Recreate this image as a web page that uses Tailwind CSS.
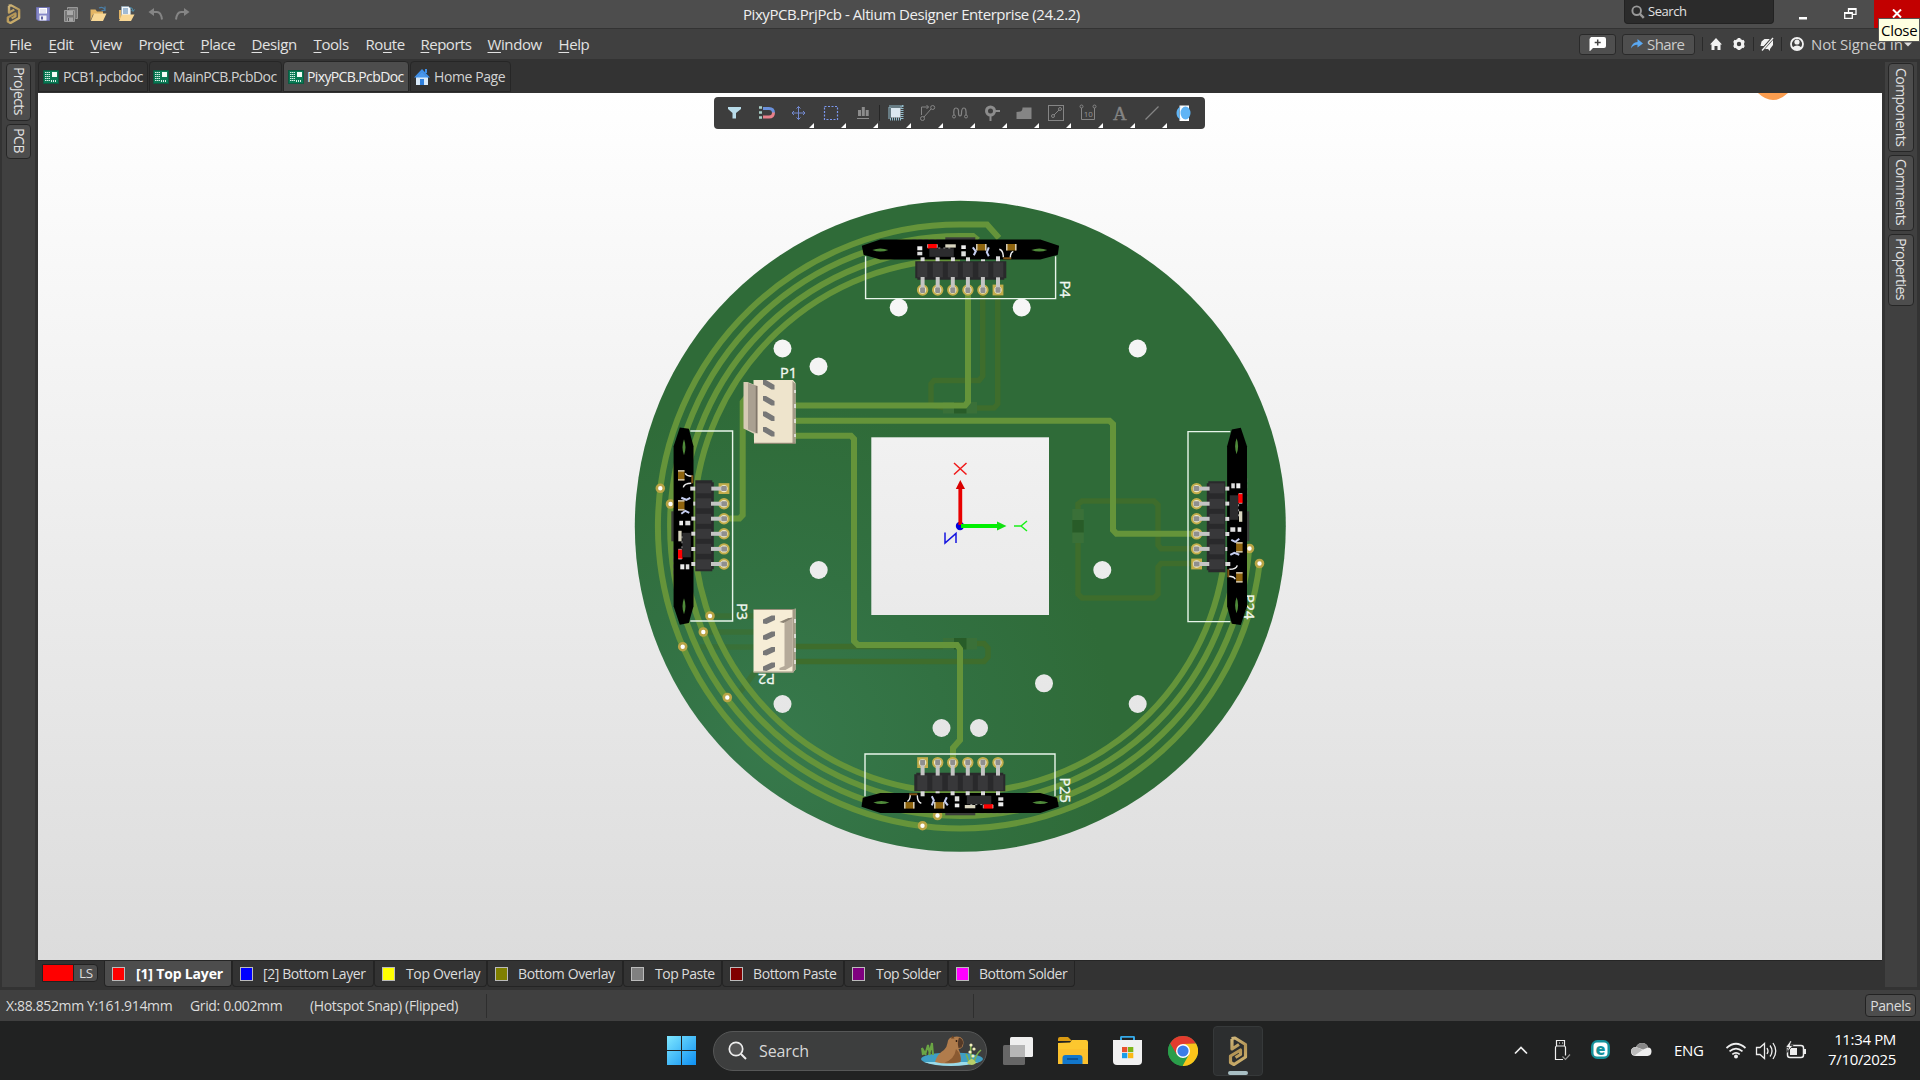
<!DOCTYPE html>
<html lang="en">
<head>
<meta charset="utf-8">
<title>PixyPCB.PrjPcb - Altium Designer Enterprise (24.2.2)</title>
<script src="https://cdn.jsdelivr.net/npm/@tailwindcss/browser@4"></script>
</head>
<body class="w-[1920px] h-[1080px] overflow-hidden bg-[#333333] font-['Open_Sans',sans-serif] text-[#e2e2e2] flex flex-col">

<svg class="absolute w-0 h-0">
  <defs>
    <linearGradient id="gold" gradientUnits="userSpaceOnUse" x1="0" y1="0" x2="20" y2="30"><stop offset="0" stop-color="#d8c084"/><stop offset=".5" stop-color="#b39455"/><stop offset="1" stop-color="#dcc17c"/></linearGradient>
    <symbol id="altium" viewBox="0 0 20 30">
      <path d="M3.500 2.500L7 2 17.500 8.500V21L6 28.500 2.500 26.500V20L12.500 14V18.500L7.500 21.500" fill="none" stroke="url(#gold)" stroke-width="3.200" stroke-linejoin="round"/>
      <path d="M4 3V13L11 8.500" fill="none" stroke="url(#gold)" stroke-width="3.200" stroke-linejoin="round"/>
    </symbol>
    <symbol id="pcbdoc" viewBox="0 0 16 14">
      <rect x=".5" y=".5" width="15" height="13" fill="#0a7a55" stroke="#0c5a41"/>
      <path d="M2 2.500h5M2 4.500h5M2 6.500h5M2 8.500h5M2 10.500h5" stroke="#d8efe6" stroke-width="1" stroke-dasharray="1.500 .5"/>
      <rect x="9" y="2" width="5" height="5" fill="#f2fbf7"/>
      <path d="M8.500 10v2M10.500 10v2M12.500 10v2" stroke="#d8efe6"/>
    </symbol>
    <symbol id="mag" viewBox="0 0 16 16"><circle cx="6.500" cy="6.500" r="4.900" fill="none" stroke="currentColor" stroke-width="2.200"/><path d="M10 10l4.600 4.800" stroke="currentColor" stroke-width="2.800"/></symbol>
  </defs>
</svg>

<!-- Title bar -->
<header class="h-7 shrink-0 bg-[#4d4d4d] flex relative">
  <div class="flex items-center w-[240px] pl-[6px]">
    <svg class="w-[15px] h-[20px]" viewBox="0 0 20 30" preserveAspectRatio="none"><use href="#altium" width="20" height="30"/></svg>
    <svg class="ml-[15px] w-[14px] h-[14px]" viewBox="0 0 14 14"><path d="M.5.5h13v13H2L.5 12z" fill="#8688c8" stroke="#6d6fae"/><rect x="3" y="1" width="8" height="5.500" fill="#fff"/><path d="M4 3h6M4 5h6" stroke="#b8b8d8" stroke-width=".7"/><rect x="3.500" y="8.500" width="7" height="5" fill="#f0f0f8"/><rect x="5" y="9.500" width="2" height="3" fill="#6264a4"/></svg>
    <svg class="ml-[14px] w-[14px] h-[15px]" viewBox="0 0 14 15"><path d="M3.500.5h10v11h-2M3.500.5v2" fill="#777" stroke="#999"/><path d="M.5 3.500h10v11h-10z" fill="#777" stroke="#9b9b9b"/><path d="M3 4h6v4H3z" fill="#aaa"/><path d="M3 10.500h6V14H3z" fill="#a5a5a5"/><path d="M4.500 11v3" stroke="#555"/></svg>
    <svg class="ml-[12px] w-[17px] h-[16px]" viewBox="0 0 17 16"><path d="M.5 3.500h5l1.500 2h6v3H3l-2.500 6z" fill="#e3b565"/><path d="M4 7.500h12.500L13 15H.8z" fill="#f8d795"/><path d="M9 2q4-2 6 2M15 .5v4h-3.500" fill="none" stroke="#4a7fa8" stroke-width="1.200"/></svg>
    <svg class="ml-[11px] w-[17px] h-[16px]" viewBox="0 0 17 16"><path d="M1 4h12v9H1z" fill="#e0b364"/><path d="M3.500.5h7l2 2V10h-9z" fill="#f4f7fa" stroke="#8da5b8" stroke-width=".7"/><path d="M5 3h5M5 5h5M5 7h5" stroke="#4d7fae"/><path d="M4 8.500h12.500L13 15H1z" fill="#f8d795"/><path d="M12 1.500q3 0 3 3.500M16.500 3.500L15 5.500 13.500 4" fill="none" stroke="#4a8fae"/></svg>
    <svg class="ml-[13px] w-[15px] h-[12px]" viewBox="0 0 15 12"><path d="M6 0v8L.5 4z" fill="#858585"/><path d="M5 4h4q4 0 5 7.500" fill="none" stroke="#858585" stroke-width="2"/></svg>
    <svg class="ml-[12px] w-[15px] h-[12px]" viewBox="0 0 15 12"><path d="M9 0v8l5.500-4z" fill="#858585"/><path d="M10 4H6q-4 0-5 7.500" fill="none" stroke="#858585" stroke-width="2"/></svg>
  </div>
  <div class="w-[1384px] pl-[503px] pt-[4px] leading-5 text-[15px] tracking-[-0.44px] text-[#efefef] whitespace-nowrap">PixyPCB.PrjPcb - Altium Designer Enterprise (24.2.2)</div>
  <div class="w-[150px] h-6 bg-[#2b2b2b] border border-t-0 border-[#222] rounded-b flex items-center pl-[6px] pt-px text-[13px] tracking-[-0.45px]">
    <svg class="w-[14px] h-[14px] text-[#999] mr-[3px]"><use href="#mag"/></svg>Search
  </div>
  <div class="w-[100px] flex">
    <svg class="w-[100px] h-[28px]" viewBox="1774 0 100 28"><rect x="1799" y="17" width="8" height="2.500" fill="#fff"/><path d="M1848.500 12V8.700h7.500v5.600h-3.500M1844.700 12.700h7.600v5.600h-7.600z" fill="none" stroke="#fff" stroke-width="1.300"/><path d="M1848 9h8M1844 13h8" stroke="#fff" stroke-width="2"/></svg>
  </div>
  <div class="w-[46px] bg-[#c20000] flex justify-center pt-[9px]">
    <svg class="w-[10px] h-[9px]" viewBox="0 0 10 9"><path d="M1 .5l8 8M9 .5l-8 8" stroke="#fff" stroke-width="2"/></svg>
  </div>
  <div class="absolute z-10 left-[1878px] top-[18px] w-[42px] h-6 bg-[#ffffe1] border border-[#555] text-black text-[15px] leading-[22px] pl-[2px] tracking-[-0.3px]">Close</div>
</header>

<!-- Menu bar -->
<nav class="h-[31px] shrink-0 bg-[#404040] border-t border-[#333] flex items-center text-[15px] tracking-[-0.4px] underline-offset-2 whitespace-nowrap">
  <div class="flex w-[1579px] pl-[9.500px]">
    <span class="w-[39px]"><u>F</u>ile</span><span class="w-[42px]"><u>E</u>dit</span><span class="w-[48px]"><u>V</u>iew</span><span class="w-[62px] tracking-[-0.5px]">Proje<u>c</u>t</span><span class="w-[51px]"><u>P</u>lace</span><span class="w-[62px]"><u>D</u>esign</span><span class="w-[52px]"><u>T</u>ools</span><span class="w-[55px]">Ro<u>u</u>te</span><span class="w-[67px] tracking-[-0.5px]"><u>R</u>eports</span><span class="w-[71px]"><u>W</u>indow</span><span><u>H</u>elp</span>
  </div>
  <div class="w-[37px] h-[21px] rounded-[3px] border border-[#2a2a2a] bg-[#4f4f4f] flex items-center justify-center"><svg class="w-[17px] h-[14px]" viewBox="0 0 17 14"><path d="M2 0h13a2 2 0 012 2v7a2 2 0 01-2 2H4L1 14H.5V2z" fill="#fff"/><path d="M8.700 2.500v6M5.700 5.500h6" stroke="#444" stroke-width="1.500"/></svg></div>
  <div class="ml-[6px] w-[73px] h-[21px] rounded-[3px] border border-[#2a2a2a] bg-[#4f4f4f] flex items-center pl-[8px] text-[#ccc] tracking-[-0.6px]"><svg class="w-[12px] h-[10px] mr-[4px]" viewBox="0 0 12 10"><path d="M0 9.500Q1 3 6.500 3V0L12 4.500 6.500 8.500V5.800Q2.500 5.500 0 9.500z" fill="#5aa8f2"/></svg>Share</div>
  <svg class="w-[110px] h-[30px]" viewBox="1695 29 110 30">
    <path d="M1702.500 37v14M1753.500 37v14M1781.500 37v14" stroke="#2a2a2a"/>
    <path d="M1716 38l6 6.500h-1.500V50h-3v-4h-3v4h-3v-5.500H1710z" fill="#f2f2f2"/>
    <circle cx="1739" cy="44" r="3.700" fill="none" stroke="#f2f2f2" stroke-width="3"/><path d="M1739 38v3M1739 47v3M1733.800 41l2.600 1.500M1741.600 45.500l2.600 1.500M1733.800 47l2.600-1.500M1741.600 42.500l2.600-1.500" stroke="#f2f2f2" stroke-width="2.800"/>
    <path d="M1760.500 46l1-4.500 3-2.500h5.500l-6 7zM1765 49l8-9v5l-3 4v2l-2-2z" fill="#f2f2f2"/><path d="M1761.500 50.500l11.500-13" stroke="#404040" stroke-width="2.500"/><path d="M1762 50.500l11-12.500" stroke="#f2f2f2" stroke-width="1.300"/>
    <circle cx="1797" cy="44" r="6" fill="none" stroke="#f2f2f2" stroke-width="1.800"/><circle cx="1797" cy="42" r="2.600" fill="#f2f2f2"/><path d="M1792.500 47.500q4.500-4 9 0-4.500 5-9 0z" fill="#f2f2f2"/>
  </svg>
  <span class="ml-[6px] text-[#ccc] tracking-[-0.15px]">Not Signed In</span>
  <svg class="ml-px w-[8px] h-[5px]" viewBox="0 0 8 5"><path d="M0 .5h8L4 4.500z" fill="#ddd"/></svg>
</nav>

<!-- Workspace -->
<main class="h-[931px] shrink-0 flex">
  <aside class="w-[38px] pt-[3px] pb-[3px] pl-[2px]">
    <div class="w-[33px] h-[925px] bg-[#404040] flex flex-col items-center gap-[3px] pt-px">
      <div class="w-[25px] h-[58px] rounded border border-[#262626] bg-[#4d4d4d] [writing-mode:vertical-rl] text-[14px] leading-[21px] tracking-[-0.55px] pt-[3px]">Projects</div>
      <div class="w-[25px] h-[35px] rounded border border-[#262626] bg-[#4d4d4d] [writing-mode:vertical-rl] text-[14px] leading-[21px] tracking-[-0.4px] pt-[3px]">PCB</div>
    </div>
  </aside>

  <section class="w-[1844px] flex flex-col">
    <div class="h-[34px] pt-[2px] flex gap-px text-[14px] tracking-[-0.5px] text-[#d2d2d2] whitespace-nowrap">
      <div class="w-[110px] h-[31px] border border-[#262626] rounded-t flex items-center pl-[4px]"><svg class="w-4 h-[14px] mr-[4px]"><use href="#pcbdoc"/></svg>PCB1.pcbdoc</div>
      <div class="w-[133px] h-[31px] border border-[#262626] rounded-t flex items-center pl-[3px] tracking-[-0.56px]"><svg class="w-4 h-[14px] mr-[4px]"><use href="#pcbdoc"/></svg>MainPCB.PcbDoc</div>
      <div class="w-[126px] h-[31px] border border-[#262626] rounded-t bg-[#4d4d4d] text-[#f0f0f0] flex items-center pl-[4px] tracking-[-0.62px]"><svg class="w-4 h-[14px] mr-[3px]"><use href="#pcbdoc"/></svg>PixyPCB.PcbDoc</div>
      <div class="w-[101px] h-[31px] border border-[#262626] rounded-t flex items-center pl-[3px] tracking-[-0.4px]"><svg class="w-4 h-[16px] mr-[4px]" viewBox="0 0 16 16"><path d="M2 8h12v8H2z" fill="#d9eafa"/><path d="M8 0l8 8.500h-2.500L8 3.500 2.500 8.500H0zM11 0h2v4h-2z" fill="#3f8fe8"/><path d="M8 3l6 5.500H2z" fill="#4a97ec"/><path d="M6 10h4v6H6z" fill="#2f80dd"/></svg>Home Page</div>
    </div>

    <div class="relative h-[867px] bg-linear-to-b from-white to-[#dcdcdc]">
      <svg class="block w-[1844px] h-[867px]" viewBox="38 93 1844 867">
        <defs>
          <linearGradient id="sky" gradientUnits="userSpaceOnUse" x1="0" y1="93" x2="0" y2="960"><stop offset="0" stop-color="#fff"/><stop offset="1" stop-color="#dcdcdc"/></linearGradient>
          <radialGradient id="board" gradientUnits="userSpaceOnUse" cx="775" cy="740" r="340"><stop offset="0" stop-color="#37794c"/><stop offset=".5" stop-color="#327142"/><stop offset="1" stop-color="#2f6b38"/></radialGradient>
          <g id="via"><circle r="3.500" fill="#fff" stroke="#b8a445" stroke-width="2.600"/></g>
          <g id="pad"><circle r="4.700" fill="#efe9c8" stroke="#c2ad4b" stroke-width="2"/><rect x="-2" y="-13" width="4" height="13" fill="#c4c4c4"/><rect x="-2.500" y="-2.500" width="5" height="5.500" rx="1" fill="#8f8f8f"/></g>
          <!-- Sensor module standing on a six-pin header -->
          <g id="module">
            <path d="M865.300 256V298.300H1055.300V256" fill="none" stroke="#e8f5ea" stroke-width="1.400"/>
            <path d="M945 237h30v4h-30z" fill="#3a3d3a"/>
            <path d="M912 239.500h30" stroke="#666" stroke-dasharray="4 2"/>
            <path d="M861.500 245.500L880 239.300H1040L1058.800 245.500L1057.500 254.500L1040 259.200H880L863.300 254.500z" fill="#000"/>
            <path d="M872 249.700q8-3 16 0-8 3-16 0zM1031 249.700q8-3 16 0-8 3-16 0z" fill="#4f8a3a"/>
            <rect x="917" y="246" width="5" height="4" fill="#eee"/><rect x="917" y="251.500" width="5" height="3.500" fill="#ddd"/>
            <rect x="927.300" y="243.700" width="9.500" height="4.600" fill="#ff0000"/><path d="M927.300 244v3.500M937 244v3.500" stroke="#ddd" stroke-width=".7"/>
            <rect x="929" y="248" width="24.500" height="8.500" fill="#2c2c2e"/><path d="M938 247.700h14" stroke="#999" stroke-dasharray="2 3"/>
            <rect x="945" y="244" width="10.500" height="3.300" fill="#d8d4bf"/>
            <rect x="961" y="245" width="4.500" height="3.700" fill="#eee"/><rect x="961" y="251" width="4.500" height="5" fill="#ddd"/>
            <rect x="976" y="243.700" width="10" height="6.500" fill="#8f640e"/><path d="M976.500 243.700v6.500M985.500 243.700v6.500" stroke="#e2ddd0" stroke-width="1.300"/>
            <path d="M972.500 247l3 4-2 4M988.500 247l-2 5 2 4" fill="none" stroke="#c5cef0" stroke-width="2"/>
            <rect x="1006" y="243.700" width="10" height="6.500" fill="#8f640e"/><path d="M1006.500 243.700v6.500M1015.500 243.700v6.500" stroke="#e2ddd0" stroke-width="1.300"/>
            <path d="M999 249q4 1 4 8M1013 251q-3 1-3 7" fill="none" stroke="#eee" stroke-width="1.400"/><path d="M1003 258h8" stroke="#7e5415" stroke-width="2"/>
            <g fill="#d8d8d8"><rect x="920.300" y="257" width="4" height="5"/><rect x="935.300" y="257" width="4" height="5"/><rect x="950.600" y="257" width="4" height="5"/><rect x="965.700" y="257" width="4" height="5"/><rect x="980.700" y="259" width="4" height="3"/><rect x="995.700" y="256" width="4" height="6"/></g>
            <path d="M915 261h91v17h-2v1.500H917V278h-2z" fill="#29292b"/>
            <g fill="#38383a"><rect x="917" y="262" width="10" height="15"/><rect x="932.500" y="262" width="10" height="15"/><rect x="947.500" y="262" width="10" height="15"/><rect x="962.500" y="262" width="10" height="15"/><rect x="978" y="262" width="10" height="15"/><rect x="993" y="262" width="10" height="15"/></g>
            <use href="#pad" x="922.300" y="289.700"/><use href="#pad" x="937.400" y="289.700"/><use href="#pad" x="952.500" y="289.700"/><use href="#pad" x="967.600" y="289.700"/><use href="#pad" x="982.600" y="289.700"/>
            <rect x="992.300" y="284.300" width="10.800" height="10.800" fill="#c2ad4b"/><circle cx="997.700" cy="289.700" r="3.700" fill="#efe9c8"/><rect x="995.700" y="277" width="4" height="13" fill="#c4c4c4"/><rect x="995.200" y="287" width="5" height="5.500" rx="1" fill="#8f8f8f"/>
          </g>
        </defs>

        <path d="M1758 93q15 14 30 0z" fill="#fb9d4f"/>

        <circle cx="960.300" cy="526.300" r="325.500" fill="url(#board)"/>

        <!-- Bottom side copper seen through the board -->
        <g fill="none" stroke="#3e6d2c" stroke-width="5.500">
          <path d="M982.700 290V376L979 380.500H934L931 384V405L945 408M997.700 290V404L994 408H965"/>
          <path d="M1078 510V504L1082 501H1154L1158 505V545L1161 548.700H1196M1078 540V594L1082 598H1154L1158 594V567L1161 563.500H1196"/>
          <path d="M975 643.500H984L988 648V657L984 661.500H795M943 646.500H795" />
          <path d="M710 616H755M703 632H755M700 647H755M755 672L740 692" opacity=".55"/>
        </g>
        <g fill="#3a7038"><rect x="943" y="402" width="34" height="11.500"/><rect x="943" y="638" width="34" height="11.500"/><rect x="1072.300" y="509" width="11.500" height="34"/></g>
        <g fill="#285c28"><rect x="954" y="402" width="12.500" height="11.500"/><rect x="954" y="638" width="12.500" height="11.500"/><rect x="1072.300" y="520" width="11.500" height="12.500"/></g>

        <!-- Top side copper -->
        <g fill="none" stroke="#65943a" stroke-width="6">
          <path d="M999 238L987 224.500H960A302 302 0 1 0 1259.700 563"/>
          <path d="M978 240L973 236H960A290 290 0 1 0 1249.200 548.500"/>
          <path d="M960 248A278 278 0 1 0 1236 560"/>
          <path d="M960 259.500A266.500 266.500 0 1 0 1222.500 572"/>
          <path d="M795 405.500H965L968 402V290M795 420.700H1109.500L1113 424V530L1116.500 533.800H1196M795 435.700H851L854 439V641L858 645H957L960 649V740L953 748V762"/>
          <path d="M723.700 518.500H739.500L742.700 515V402L746 398H755"/>
        </g>

        <g fill="url(#sky)">
          <rect x="871.300" y="437.300" width="177.700" height="177.700"/>
          <circle cx="782.500" cy="348.500" r="9"/><circle cx="818.500" cy="366.500" r="9"/><circle cx="898.700" cy="307.500" r="9"/><circle cx="1021.700" cy="307.500" r="9"/><circle cx="1137.700" cy="348.500" r="9"/><circle cx="818.700" cy="570" r="9"/><circle cx="1102.300" cy="570" r="9"/><circle cx="782.500" cy="704" r="9"/><circle cx="1137.700" cy="704" r="9"/><circle cx="1044" cy="683.300" r="9"/><circle cx="941.500" cy="728" r="9"/><circle cx="979" cy="728" r="9"/>
        </g>

        <g><use href="#via" x="660.300" y="488.300"/><use href="#via" x="670.500" y="504"/><use href="#via" x="710" y="616"/><use href="#via" x="703.300" y="632"/><use href="#via" x="682.700" y="646.700"/><use href="#via" x="727.300" y="697.500"/><use href="#via" x="937.500" y="815.500"/><use href="#via" x="922.500" y="825.700"/><use href="#via" x="1259.500" y="563.500"/><use href="#via" x="1249.500" y="548.500"/></g>

        <g fill="#f2f8f2" stroke="#f2f8f2" stroke-width=".35" font-family="Open Sans, sans-serif" font-size="14.500">
          <text x="780" y="377.700">P1</text>
          <text transform="translate(775 674) rotate(180)">P2</text>
          <text transform="translate(1059.500 280.500) rotate(90)">P4</text>
          <text transform="translate(1059.500 777.500) rotate(90)">P25</text>
          <text transform="translate(737 603) rotate(90)">P3</text>
          <text transform="translate(1243.500 594) rotate(90)">P24</text>
        </g>

        <use href="#module" transform="translate(.3 .3)"/>
        <use href="#module" transform="rotate(90 960.300 526.300) translate(.3 .3)"/>
        <use href="#module" transform="rotate(180 960.300 526.300) translate(.3 .3)"/>
        <use href="#module" transform="rotate(-90 960.300 526.300) translate(.3 .3)"/>

        <!-- Connector P1 -->
        <g>
          <path d="M753.500 380H793l2.500 3v60.500H754z" fill="#eee4cc"/><path d="M792.500 381l3 3v59.500h-3z" fill="#a39a86"/>
          <path d="M754 443.300h41" stroke="#877e6b"/>
          <path d="M743.500 382h4l10 4v47.500h-4l-10-5z" fill="#d6cab5"/><path d="M748 383l9.500 3v47.500l-9.500-4z" fill="#aaa091"/><path d="M756.500 386v47" stroke="#80776a" stroke-width="1.500"/>
          <path d="M795 404v4M795 419v4M795 390v3M795 434v3" stroke="#eee" stroke-width="1.500"/>
          <g fill="#777"><path id="slot" d="M763 380h3l8.500 5v4.500h-3l-8.500-5z"/><use href="#slot" y="16"/><use href="#slot" y="31.500"/><use href="#slot" y="47"/></g>
        </g>
        <!-- Connector P2 -->
        <g>
          <path d="M753.500 609.500H793l2.500-1v61l-2.500 3h-39.500z" fill="#f6edd6"/><path d="M792.500 610l3-1.500v61l-3 3z" fill="#a39a86"/>
          <path d="M754 609.500h41M754 672h40" stroke="#9a907c"/>
          <path d="M779.500 622l13-5v49l-7 4h-6v-2l5-2v-46z" fill="#b5aa99"/><path d="M779.500 622l9-4h4l-9 5z" fill="#8c8374"/>
          <path d="M795 619v4M795 634v4M795 648v4M795 660v4" stroke="#eee" stroke-width="1.500"/>
          <g fill="#777"><path id="slot2" d="M763 623.500v-4l8.500-4h3.500v4.500l-8.500 4z"/><use href="#slot2" y="16"/><use href="#slot2" y="31.500"/><use href="#slot2" y="47"/></g>
        </g>

        <!-- Origin marker -->
        <circle cx="960" cy="526" r="4.200" fill="#0000dd"/>
        <path d="M960.300 525V487" stroke="#e80000" stroke-width="3.800"/><path d="M955.800 489L960.300 480l4.700 9z" fill="#d90000"/>
        <path d="M961 526H998" stroke="#00f000" stroke-width="3.800"/><path d="M997 521.500L1006.500 526 997 530.500z" fill="#10e010"/>
        <path d="M954 463L966.500 474.500M966.500 463L954 474.500" stroke="#f01818" stroke-width="1.500"/>
        <path d="M1014 526h7l6-5M1021 526l6 5" fill="none" stroke="#18f018" stroke-width="1.500"/>
        <path d="M945 532.500V543L956 533.500V543" fill="none" stroke="#1414e0" stroke-width="1.500"/>
      </svg>

      <!-- Active bar -->
      <div class="absolute left-[676px] top-[4px] w-[491px] h-8 rounded bg-[#3d3d3d]">
        <svg class="w-[491px] h-8" viewBox="714 97 491 32">
          <g fill="#fff"><path id="tri" d="M814 123v5h-5z"/><use href="#tri" x="32"/><use href="#tri" x="64"/><use href="#tri" x="97"/><use href="#tri" x="129"/><use href="#tri" x="161"/><use href="#tri" x="193"/><use href="#tri" x="225"/><use href="#tri" x="257"/><use href="#tri" x="289"/><use href="#tri" x="321"/><use href="#tri" x="353"/></g>
          <path d="M879.500 105v16" stroke="#262626"/>
          <path d="M728 107h13v2l-5 4v5.500h-3.500V113L728 109z" fill="#b9dcea"/>
          <path d="M759 107.500h3M759 112.500h3M759 117.500h3" stroke="#a9cfc7" stroke-width="2.400"/><path d="M763 108.500h6q4.500 0 4.500 4.500" fill="none" stroke="#6b91dc" stroke-width="3"/><path d="M773.500 112.500q0 4.500-4.500 4.500h-6" fill="none" stroke="#e8808a" stroke-width="3"/>
          <path d="M792 113h13M798.500 106.500v13M796.500 108.500l2-2 2 2M796.500 117.500l2 2 2-2M794 111l-2 2 2 2M803 111l2 2-2 2" fill="none" stroke="#7389cf"/>
          <rect x="824.500" y="106.500" width="13" height="13" fill="none" stroke="#7c98ee" stroke-width="1.200" stroke-dasharray="2 1.500"/>
          <path d="M857 118.500h12" stroke="#8c8c8c"/><path d="M858 110h3v6h-3zM861.800 107h3v9h-3zM865.700 110h3v6h-3z" fill="#8c8c8c"/>
          <rect x="889.500" y="106.500" width="12.500" height="12.500" fill="none" stroke="#93bccb" stroke-width="3" stroke-dasharray="1 1"/><rect x="891" y="108" width="9.500" height="9.500" fill="#dce8f0"/>
          <g fill="none" stroke="#858585"><path d="M921.500 115v-8h7M926.500 105l2 2-2 2M924 117l7-8"/><circle cx="922.500" cy="118.500" r="2"/><circle cx="932.700" cy="107.500" r="2"/></g>
          <path d="M954 115q-1-7 2-7t2.500 5q0 3 1.500 3t1.500-3q0-5 2.500-5t2 7" fill="none" stroke="#858585" stroke-width="1.200"/><circle cx="954" cy="116.500" r="1.500" fill="none" stroke="#858585"/><circle cx="966" cy="116.500" r="1.500" fill="none" stroke="#858585"/>
          <circle cx="990.500" cy="111" r="4" fill="none" stroke="#8c8c8c" stroke-width="3"/><path d="M990.500 115v6M995 111h5" stroke="#8c8c8c" stroke-width="2"/>
          <path d="M1016.500 119v-7l4-.5q2-.5 2-4h9V119z" fill="#858585"/>
          <rect x="1048.500" y="105.500" width="15" height="15" fill="none" stroke="#858585"/><g fill="none" stroke="#858585"><path d="M1054 115l5-5"/><circle cx="1053" cy="116" r="1.500"/><circle cx="1060" cy="109" r="1.500"/></g>
          <g fill="none" stroke="#858585"><path d="M1081.500 108v11.500h13V108"/><circle cx="1081.500" cy="106.500" r="1.500"/><circle cx="1094.500" cy="106.500" r="1.500"/></g><text x="1083.800" y="117" font-family="Open Sans, sans-serif" font-size="8" fill="#959595">10</text>
          <text x="1113" y="120" font-family="Liberation Serif, serif" font-size="19" fill="#858585" stroke="#858585" stroke-width=".4">A</text>
          <path d="M1145.500 119.500L1158.500 106.500" stroke="#858585" stroke-width="1.300"/>
          <rect x="1179.500" y="105.500" width="9.500" height="15.500" fill="#fff"/><ellipse cx="1185.500" cy="113" rx="5" ry="6.500" fill="#5fb4f5"/><path d="M1180.500 106.500q-4 2-4 6.500t4 6.500q-2.500-6.500 0-13z" fill="#5fb4f5"/>
        </svg>
      </div>
    </div>

    <!-- Layer tabs -->
    <div class="h-[30px] border-t border-[#262626] flex text-[14px] tracking-[-0.4px] whitespace-nowrap text-[#dcdcdc]">
      <div class="ml-[4px] mt-[3px] w-[56px] h-[18px] border border-[#222] rounded-r bg-[#4d4d4d] flex leading-4 text-[13.500px]"><span class="w-[31px] h-4 bg-[#ff0000] border-r border-[#222]"></span><span class="pl-[5px]">LS</span></div>
      <div class="ml-[6px] w-[128px] h-[26px] border border-t-0 border-[#242424] rounded-b bg-[#4d4d4d] text-white font-bold flex items-center pl-[7px] tracking-[-0.17px]"><i class="w-[13px] h-[14px] mr-[11px] bg-[#ff0000] border border-[#bbb]"></i>[1] Top Layer</div>
      <div class="w-[142px] h-[26px] border border-t-0 border-[#242424] rounded-b flex items-center pl-[7px]"><i class="w-[13px] h-[14px] mr-[10px] bg-[#0000ff] border border-[#bbb]"></i>[2] Bottom Layer</div>
      <div class="w-[113px] h-[26px] border border-t-0 border-[#242424] rounded-b flex items-center pl-[7px] tracking-[-0.35px]"><i class="w-[13px] h-[14px] mr-[11px] bg-[#ffff00] border border-[#bbb]"></i>Top Overlay</div>
      <div class="w-[136px] h-[26px] border border-t-0 border-[#242424] rounded-b flex items-center pl-[7px]"><i class="w-[13px] h-[14px] mr-[10px] bg-[#808000] border border-[#bbb]"></i>Bottom Overlay</div>
      <div class="w-[99px] h-[26px] border border-t-0 border-[#242424] rounded-b flex items-center pl-[7px] tracking-[-0.5px]"><i class="w-[13px] h-[14px] mr-[11px] bg-[#808080] border border-[#bbb]"></i>Top Paste</div>
      <div class="w-[122px] h-[26px] border border-t-0 border-[#242424] rounded-b flex items-center pl-[7px]"><i class="w-[13px] h-[14px] mr-[10px] bg-[#800000] border border-[#bbb]"></i>Bottom Paste</div>
      <div class="w-[104px] h-[26px] border border-t-0 border-[#242424] rounded-b flex items-center pl-[7px] tracking-[-0.55px]"><i class="w-[13px] h-[14px] mr-[11px] bg-[#800080] border border-[#bbb]"></i>Top Solder</div>
      <div class="w-[127px] h-[26px] border border-t-0 border-[#242424] rounded-b flex items-center pl-[7px] tracking-[-0.47px]"><i class="w-[13px] h-[14px] mr-[10px] bg-[#ff00ff] border border-[#bbb]"></i>Bottom Solder</div>
    </div>
  </section>

  <aside class="w-[38px] pt-[3px] pb-[3px] pl-[3px]">
    <div class="w-[32px] h-[925px] bg-[#404040] flex flex-col items-center gap-[3px] pt-px">
      <div class="w-[26px] h-[89px] rounded border border-[#262626] bg-[#4d4d4d] [writing-mode:vertical-rl] text-[14px] leading-[23px] tracking-[-0.55px] pt-[4px]">Components</div>
      <div class="w-[26px] h-[76px] rounded border border-[#262626] bg-[#4d4d4d] [writing-mode:vertical-rl] text-[14px] leading-[23px] tracking-[-0.65px] pt-[3px]">Comments</div>
      <div class="w-[26px] h-[72px] rounded border border-[#262626] bg-[#4d4d4d] [writing-mode:vertical-rl] text-[14px] leading-[23px] tracking-[-0.6px] pt-[3px]">Properties</div>
    </div>
  </aside>
</main>

<!-- Status bar -->
<footer class="h-[31px] shrink-0 bg-[#404040] flex items-center text-[14px] tracking-[-0.36px] text-[#dcdcdc] whitespace-nowrap pl-[6px]">
  <span class="w-[184px]">X:88.852mm Y:161.914mm</span>
  <span class="w-[120px]">Grid: 0.002mm</span>
  <span class="w-[176px]">(Hotspot Snap) (Flipped)</span>
  <span class="w-[487px] h-6 border-l border-[#2e2e2e]"></span>
  <span class="w-[892px] h-6 border-l border-[#2e2e2e]"></span>
  <span class="w-[51px] h-[23px] rounded border border-[#222] bg-[#4d4d4d] text-center leading-[21px]">Panels</span>
</footer>

<!-- Taskbar -->
<div class="h-[59px] shrink-0 bg-[#212222] flex items-center text-white">
  <svg class="ml-[667px] mb-px w-[29px] h-[29px]" viewBox="0 0 29 29"><defs><linearGradient id="win" gradientUnits="userSpaceOnUse" x1="0" y1="0" x2="29" y2="29"><stop offset="0" stop-color="#7fe8ff"/><stop offset="1" stop-color="#0d8ff2"/></linearGradient></defs><path d="M0 0h14v14H0zM15 0h14v14H15zM0 15h14v14H0zM15 15h14v14H15z" fill="url(#win)"/></svg>
  <div class="ml-[17px] w-[274px] h-10 rounded-full bg-[#3d3e3e] border border-[#565757] flex items-center pl-[14px] text-[16px] text-[#d8d8d8]">
    <svg class="w-[19px] h-[19px]" viewBox="0 0 19 19"><circle cx="8" cy="8" r="6.700" fill="#555" stroke="#eee" stroke-width="1.700"/><path d="M13 13l5 5" stroke="#eee" stroke-width="2"/></svg>
    <span class="ml-[12px] w-[161px] tracking-[-0.1px]">Search</span>
    <svg class="w-[64px] h-[32px]" viewBox="0 0 64 32">
      <ellipse cx="32" cy="24" rx="31" ry="6.500" fill="#3f9fc4"/><path d="M4 27h54q-10 4-27 4T4 27z" fill="#9adbea"/>
      <path d="M5 20l3-10 2 10M9 20l3-12 1 12M3 20l-1-7 4 7" stroke="#6aa544" stroke-width="2" fill="none"/>
      <path d="M15 27Q17 19 24 15 27 12 27.500 8 28 2.500 33 2 40 .5 42.500 4 44.500 7 42.500 12 41 14 38.500 14 41.500 20 40.500 27 27 30 15 27z" fill="#b07c4c"/>
      <path d="M36 14q6 6 4.500 13-9 1.500-16 .5 10-3 11.500-13.500z" fill="#8a5a31"/><path d="M39 2.500q4.500 1.500 4 6l-1.500 4-3 .5q-1.500-5 .5-10.500z" fill="#553a28"/><path d="M31 3.500l1.500-3 2 3z" fill="#6d4524"/><circle cx="36.500" cy="6" r=".9" fill="#2b1a10"/>
      <path d="M52 27q-2-10-1-18M54 27q2-8 7-12M49 27q-2-6-3-8" stroke="#7fb04b" stroke-width="1.600" fill="none"/><g fill="#f4f0c0"><circle cx="51" cy="10" r="1.600"/><circle cx="54" cy="14" r="1.600"/><circle cx="50" cy="17" r="1.600"/><circle cx="53" cy="21" r="1.600"/></g><path d="M47 28q5-8 9 0-4 4-9 0z" fill="#b9cf6a"/>
    </svg>
  </div>
  <svg class="ml-[16px] w-[30px] h-[28px]" viewBox="0 0 30 28"><rect x="0" y="8" width="22" height="20" rx="1.500" fill="#666"/><rect x="7" y="0" width="23" height="20" rx="1.500" fill="#efefef"/><path d="M7 8h15v12H8.500Q7 20 7 18.500z" fill="#b6b6b6"/></svg>
  <svg class="ml-[25px] w-[30px] h-[28px]" viewBox="0 0 30 28"><path d="M0 2Q0 0 2 0h8l4 4H0z" fill="#d99a12"/><path d="M0 6l12-.5L14 3h14q2 0 2 2v22H0z" fill="#fcc72f"/><path d="M0 12h30v14q0 1-1 1H0z" fill="#fbc02d"/><path d="M4.500 27v-6q0-3 3-3h14q3 0 3 3v6z" fill="#1277cc"/><path d="M9 22h11" stroke="#0a4f92" stroke-width="1.700"/></svg>
  <svg class="ml-[25px] mb-px w-[29px] h-[29px]" viewBox="0 0 29 29"><path d="M8 5V1.500Q8 .8 9 .8h11q1 0 1 .7V5" fill="none" stroke="#35a9e8" stroke-width="2"/><path d="M0 4h29v21q0 4-4 4H4q-4 0-4-4z" fill="#f1f1f1"/><path d="M9 11h5.300v5.200H9z" fill="#e8512c"/><path d="M15 11h5.300v5.200H15z" fill="#7cb518"/><path d="M9 17h5.300v5.200H9z" fill="#1b9de8"/><path d="M15 17h5.300v5.200H15z" fill="#fbb813"/></svg>
  <svg class="ml-[26px] w-[30px] h-[30px]" viewBox="0 0 30 30"><circle cx="15" cy="15" r="15" fill="#2a9d4a"/><path d="M2 7.500A15 15 0 0128 7.500L15 8.500 8.800 18.700z" fill="#e33b2e"/><path d="M28 7.500A15 15 0 0114.500 30L21 18.500 15 8z" fill="#fbc51a"/><path d="M2 7.500L8.700 18.700 15 22 14.500 30A15 15 0 012 7.500z" fill="#2a9d4a"/><circle cx="15" cy="15" r="7" fill="#fff"/><circle cx="15" cy="15" r="5.600" fill="#3a7de8"/></svg>
  <div class="relative ml-[15px] w-[50px] h-[50px] rounded-[4px] bg-[#2c2e2f] border border-[#36393a] flex items-center justify-center">
    <svg class="w-[20px] h-[30px]" viewBox="0 0 20 30"><use href="#altium" width="20" height="30"/></svg>
    <i class="absolute left-[14px] top-[44px] w-[20px] h-[4px] rounded-full bg-[#a9bfc4]"></i>
  </div>
  <svg class="ml-[249px] w-[180px] h-[40px]" viewBox="1512 1031 180 40">
    <path d="M1515 1053.500l6-6 6 6" fill="none" stroke="#eee" stroke-width="1.700"/>
    <g fill="none" stroke="#eee" stroke-width="1.200"><path d="M1556.500 1046v-5.500h8v5.500M1563 1059.500h-7.500v-12q0-1.500 1.500-1.500h7q1.500 0 1.500 1.500v8M1559 1043h1M1562 1043h1"/><path d="M1562.500 1056.500l3 3 4.500-5" stroke="#999"/></g>
    <rect x="1591" y="1040" width="19" height="19" rx="6.500" fill="#159099"/><rect x="1593.500" y="1042.500" width="14" height="14" rx="3.500" fill="#fff"/><text x="1595.600" y="1055" font-family="Open Sans, sans-serif" font-weight="800" font-size="16" fill="#159099">e</text>
    <path d="M1636 1056q-5 0-5-4.500t5-4.500q2-4 6-4 5 0 6 4.500 3.500 0 3.500 4t-4 4.500z" fill="#eee"/><path d="M1636 1047q2-4 6-4 5 0 6 4.500l-5 2z" fill="#888"/><path d="M1631.500 1049.500q2-3.500 7-1.500l4 2-8 5.500q-4-2-3-6z" fill="#bbb"/>
  </svg>
  <span class="ml-[-18px] w-[52px] text-[15px] tracking-[-0.3px]">ENG</span>
  <svg class="w-[82px] h-[20px]" viewBox="1726 1040 82 20">
    <g fill="none" stroke="#eee" stroke-width="1.700"><path d="M1726.500 1047q9.500-8.500 19 0M1729.500 1050.300q6.500-5.500 13 0M1732.300 1053.300q3.700-3 7.400 0"/></g><circle cx="1736" cy="1055.500" r="2" fill="#eee"/>
    <g fill="none" stroke="#eee" stroke-width="1.300"><path d="M1756.500 1046.500h3.500l4.500-4v15l-4.500-4h-3.500zM1767 1047q2 3 0 6M1770 1044.500q4 5.500 0 11M1773 1042q5.500 8 0 16"/></g>
    <rect x="1787.500" y="1044.500" width="16" height="12" rx="2.500" fill="none" stroke="#eee" stroke-width="1.500"/><rect x="1790" y="1047" width="7" height="7" fill="#eee"/><path d="M1805 1048v5" stroke="#eee" stroke-width="2"/><path d="M1790.500 1039.500l-5 7h3l-1.500 5 6-7h-3l2-5z" fill="#eee" stroke="#212222" stroke-width=".8"/>
  </svg>
  <div class="w-[88px] text-right text-[15px] leading-5 tracking-[-0.35px] -mt-[4px]">11:34 PM<br>7/10/2025</div>
</div>
</body>
</html>
